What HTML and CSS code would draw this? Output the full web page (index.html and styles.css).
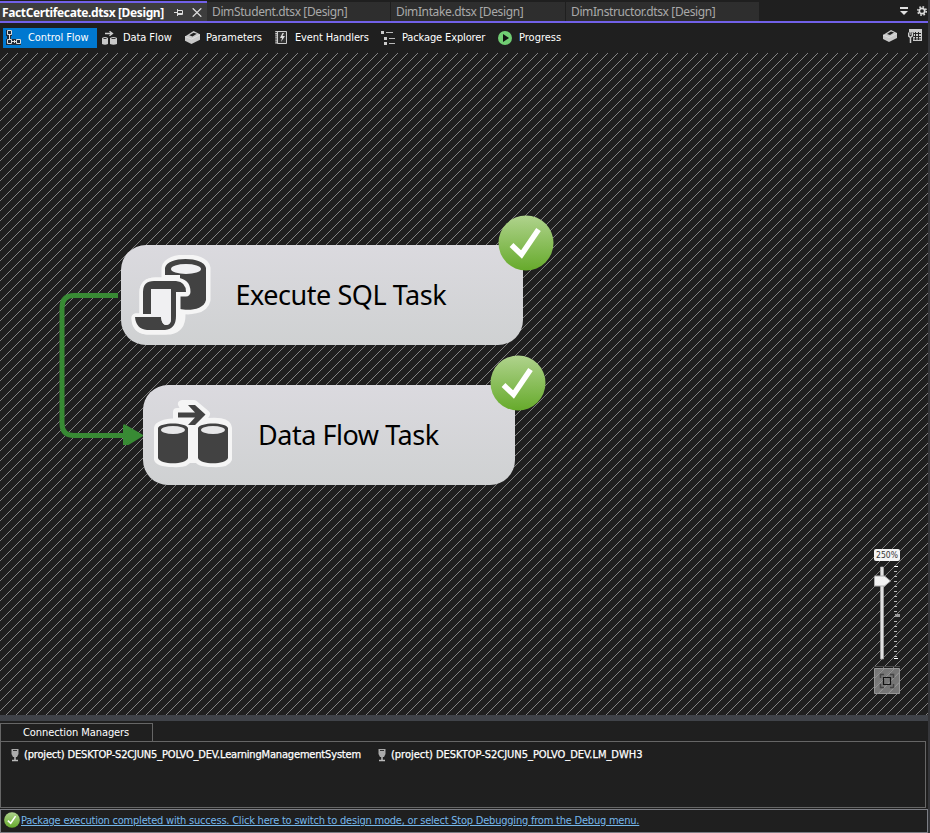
FILE: index.html
```html
<!DOCTYPE html>
<html lang="en">
<head>
<meta charset="utf-8">
<title>FactCertifecate.dtsx [Design]</title>
<link rel="stylesheet" href="styles.css">
</head>
<body>
<svg class="defs" width="0" height="0">
  <defs>
    <linearGradient id="green" x1="0" y1="0" x2="0" y2="1"><stop offset="0" stop-color="#b0d38d"/><stop offset="1" stop-color="#66aa2b"/></linearGradient>
    <symbol id="ok" viewBox="0 0 56 56"><circle cx="28" cy="28" r="27.5" fill="url(#green)"/><path d="M13.5 30l10 9.500L40.500 14.500" fill="none" stroke="#fff" stroke-width="5.500"/></symbol>
    <symbol id="box" viewBox="0 0 14 12"><path d="M0 5L8 0l6 3v5l-8 4-6-3z" fill="#c8c8c8"/><path d="M4 4l4-2.500 3 1-4 2.500z" fill="#202020"/><path d="M0 5l6 2.500L14 3.500" fill="none" stroke="#e4e4e4" stroke-width=".7"/></symbol>
    <symbol id="plug" viewBox="0 0 8 13"><path d="M.5 0h7v5L6 8H2L.5 5z" fill="#aaa"/><path d="M2 1.500h4" stroke="#333"/><path d="M4 8v4M1 11.500h6" stroke="#bbb" stroke-width="1.500"/></symbol>
  </defs>
</svg>
<div class="window">
  <header class="tabs">
    <div class="tab active"><span class="t0">FactCertifecate.dtsx [Design]</span>
      <svg class="pin" width="9" height="9" viewBox="0 0 9 9"><path d="M0 4.500h3M3.500 1v7M4 2.500h4.500v4H4M4 5.500h4" fill="none" stroke="#ddd"/></svg>
      <svg class="close" width="10" height="9" viewBox="0 0 10 9"><path d="M.7.3l8.600 8.400M9.300.3L.7 8.700" stroke="#ddd" stroke-width="1.300"/></svg>
    </div>
    <div class="tab w1"><span>DimStudent.dtsx [Design]</span></div>
    <div class="tab w2"><span>DimIntake.dtsx [Design]</span></div>
    <div class="tab w3"><span>DimInstructor.dtsx [Design]</span></div>
    <div class="tabtools">
      <svg width="8" height="8" viewBox="0 0 8 8"><path d="M0 0h8v2H0zM0 4h8L4 8z" fill="#e0e0e0"/></svg>
      <svg width="10" height="10" viewBox="0 0 10 10"><circle cx="5" cy="5" r="2.700" fill="none" stroke="#ddd" stroke-width="1.700"/><circle cx="5" cy="5" r="4.200" fill="none" stroke="#ddd" stroke-width="1.600" stroke-dasharray="1.650 1.650"/></svg>
    </div>
  </header>
  <nav class="toolbar">
    <div class="tool selected">
      <svg width="15" height="15" viewBox="0 0 15 15"><path d="M0 0h6v6H5v3h10v6H0V9h1V6H0z" fill="#1f2a38"/><path d="M1.500.500h4v4h-4zM1.500 9.500h4v4h-4zM10.500 9.500h4v4h-4z" fill="none" stroke="#ddd"/><path d="M3.500 5v4M6 11.500h4M8.500 10v3" stroke="#ddd"/></svg>
      <span class="a0">Control Flow</span>
    </div>
    <div class="tool p1">
      <svg width="15" height="14" viewBox="0 0 15 14"><path d="M3 2.500h7M7.500.300l3 2.200-3 2.200" fill="none" stroke="#ccc" stroke-width="1.300"/><path d="M0 7q3-2 6 0v6q-3 1.500-6 0zM8 7q3.500-2 7 0v6q-3.500 1.500-7 0z" fill="#c8c8c8"/><path d="M1.500 7.500h3M9.500 7.500h4" stroke="#333"/></svg>
      <span class="a1">Data Flow</span>
    </div>
    <div class="tool p2"><svg width="15" height="13"><use href="#box"/></svg><span class="a2">Parameters</span></div>
    <div class="tool p3">
      <svg width="12" height="13" viewBox="0 0 12 13"><path d="M2.500.500h9v12h-9z" fill="#333" stroke="#ccc"/><path d="M1.500 0v13" stroke="#ccc" stroke-width="2.500" stroke-dasharray="1.300 .8"/><path d="M7.500 2L5 7h2l-1 4 4-6H7.500L9 2z" fill="#ddd"/></svg>
      <span class="a3">Event Handlers</span>
    </div>
    <div class="tool p4">
      <svg width="14" height="14" viewBox="0 0 14 14"><path d="M0 0h3v3H0zM3 6h3v3H3zM3 11h3v3H3z" fill="#ccc"/><path d="M5 1.500h7M8 7.500h6M8 12.500h6" stroke="#bbb"/></svg>
      <span class="a4">Package Explorer</span>
    </div>
    <div class="tool p5">
      <svg width="14" height="14" viewBox="0 0 14 14"><circle cx="7" cy="7" r="7" fill="#71cd73"/><path d="M5 3l6 4-6 4z" fill="#111"/></svg>
      <span>Progress</span>
    </div>
    <div class="righttools">
      <svg width="14" height="12"><use href="#box"/></svg>
      <svg width="14" height="14" viewBox="0 0 14 14"><path d="M1 0h13v12H5V6H1z" fill="#ccc"/><path d="M5.500 4.500H13M5.500 7.500H13M5.500 10H13M7.500 3v8M10.500 3v8" stroke="#252525"/><path d="M2.500 14V8M.7 3.500V7l1.800 1.500L4.300 7V3.500" fill="none" stroke="#202020" stroke-width="3"/><path d="M2.500 14V8M.7 3.500V7l1.800 1.500L4.300 7V3.500" fill="none" stroke="#ccc" stroke-width="1.500"/></svg>
    </div>
  </nav>
  <main class="canvas">
    <svg class="hatch" width="928" height="662">
      <defs><pattern id="lines" width="10" height="10" patternUnits="userSpaceOnUse" y="8"><path d="M9 0h1v1H9zM8 1h1v1H8zM7 2h1v1H7zM6 3h1v1H6zM5 4h1v1H5zM4 5h1v1H4zM3 6h1v1H3zM2 7h1v1H2zM1 8h1v1H1zM0 9h1v1H0z" fill="#828282" shape-rendering="crispEdges"/></pattern></defs>
      <rect width="928" height="662" fill="url(#lines)"/>
    </svg>
    <svg class="connector" width="90" height="160" viewBox="0 0 90 160"><path d="M60 10.500H16Q4 10.500 4 22.500V138.500Q4 150.500 16 150.500H68" fill="none" stroke="#388a34" stroke-width="5"/><path d="M65 141q0-3 3-1l18 10.500-18 11q-3 1-3-1z" fill="#388a34"/></svg>
    <section class="node sql">
      <svg class="icon" width="80" height="80" viewBox="0 0 80 80">
        <path d="M35 13C37 1 73 1 75 13V45C73 55 57 56 50 54V60Q50 73 39 75H16Q5 74 5 63H13V37Q13 27 24 27H35z" fill="#f5f5f5" stroke="#f5f5f5" stroke-width="9" stroke-linejoin="round"/>
        <path d="M34 13C36 1 73 1 75 13V45C73 55 57 56 49 54V20H34z" fill="#424242"/>
        <ellipse cx="55" cy="14" rx="15" ry="5" fill="#f0f0f2"/>
        <path d="M13 59V37Q13 27 24 27H45Q55 28 55 37H45V61Q45 74 34 75H16Q6 74 5 63H30" fill="#f5f5f5" stroke="#f5f5f5" stroke-width="9" stroke-linejoin="round"/>
        <path d="M12 59V37Q12 26 23 26H45Q55 27 55 37H45V61Q45 74 34 75H16Q5 74 4 62H30Q31 70 35 70Q40 69 40 64V34H20V59z" fill="#424242"/>
        <path d="M20 34H40V64Q40 70 35 70Q31 70 30 62H20z" fill="#f0f0f2"/>
      </svg>
      <span class="label l1">Execute SQL Task</span>
      <svg class="badge" width="56" height="56"><use href="#ok"/></svg>
    </section>
    <section class="node flow">
      <svg class="icon" width="80" height="80" viewBox="0 0 80 80">
        <path d="M5 33Q6 28 24 27V17H33L29 9H41L53 19 47 28Q74 24 75 33V64Q73 69 59 68Q46 68 45 64H35Q33 69 20 68Q6 68 5 64z" fill="#f5f5f5" stroke="#f5f5f5" stroke-width="8" stroke-linejoin="round"/>
        <path d="M5 33C7 27 33 27 35 33V63C33 70 7 70 5 63zM45 33C47 27 73 27 75 33V63C73 70 47 70 45 63z" fill="#424242"/>
        <ellipse cx="20" cy="35" rx="12" ry="4" fill="#e7e7e8"/><ellipse cx="60" cy="35" rx="12" ry="4" fill="#e7e7e8"/>
        <path d="M25 17.500H42L35 10H42L52.500 19.500 42 30H35L42 22.500H25z" fill="#424242"/>
      </svg>
      <span class="label l2">Data Flow Task</span>
      <svg class="badge" width="56" height="56"><use href="#ok"/></svg>
    </section>
    <aside class="zoom">
      <span class="percent">250%</span>
      <svg width="28" height="95" viewBox="0 0 28 95">
        <path d="M6.500 1h3v92h-3z" fill="#e2e2e2" stroke="#aaa" stroke-width=".7"/><path d="M.5 10h10l6 5-6 5H.5z" fill="#f1f1f1" stroke="#aaa"/>
        <path d="M21.500 0V94" stroke="#bbb" stroke-width="3" stroke-dasharray="1 4"/><path d="M20 .5h4M20 92.500h4" stroke="#fff"/><path d="M21 49.500h5" stroke="#999" stroke-width="3"/>
      </svg>
      <svg class="fit" width="26" height="28" viewBox="0 0 26 28"><path d="M0 .5h26" stroke="#4d4d4d"/><path d="M.5 2.500h25v25H.5z" fill="#808080" fill-opacity=".9" stroke="#969696"/><path d="M1 12L10 3M1 22L20 3M5 27L25 7M15 27L25 17" stroke="#999" stroke-width=".8"/><path d="M6.500 12V8.500H10M16 8.500h3.500V12M19.500 18v3.500H16M10 21.500H6.500V18" fill="none" stroke="#444" stroke-width="1.500"/><path d="M9.500 11.500h7v7h-7z" fill="none" stroke="#111" stroke-width="1.200"/></svg>
    </aside>
  </main>
  <div class="splitter"></div>
  <section class="connections">
    <div class="conntab"><span class="c0">Connection Managers</span></div>
    <div class="connlist">
      <div class="conn"><svg width="8" height="13"><use href="#plug"/></svg><span class="c1">(project) DESKTOP-S2CJUN5_POLVO_DEV.LearningManagementSystem</span></div>
      <div class="conn"><svg width="8" height="13"><use href="#plug"/></svg><span class="c2">(project) DESKTOP-S2CJUN5_POLVO_DEV.LM_DWH3</span></div>
    </div>
  </section>
  <footer class="status"><svg width="16" height="16"><use href="#ok"/></svg><a class="s0">Package execution completed with success. Click here to switch to design mode, or select Stop Debugging from the Debug menu.</a></footer>
</div>
</body>
</html>
```
FILE: styles.css
```css
* { box-sizing: border-box; }
body { margin: 0; background: #1f1f1f; color: #fff; font: 11px/16px "DejaVu Sans Condensed", "Noto Sans", sans-serif; overflow: hidden; }
svg { display: block; flex: none; }
span, a { white-space: nowrap; flex: none; }
.defs { position: absolute; }
.window { width: 930px; height: 833px; border-right: 2px solid #35363a; display: flex; flex-direction: column; }
.tabs { height: 23px; flex: none; display: flex; border-bottom: 2px solid #7160e8; padding-top: 1px; font: 12px/19px "Noto Sans", sans-serif; letter-spacing: -.38px; color: #a9a9a9; }
.tab { background: #2e2e2e; margin-top: 1px; border-right: 1px solid #1f1f1f; }
.tab.active { width: 207px; margin: 0; padding: 0 0 0 2px; display: flex; align-items: center; background: #3d3d3d; border-top: 2px solid #7160e8; border-right: 0; color: #fff; font-weight: 700; }
.active span { width: 162px; }
.pin { margin: 1px 0 0 10px; }
.close { margin: 1px 0 0 9px; }
.w1 { width: 184px; padding-left: 5px; }
.w2 { width: 175px; padding-left: 5px; }
.w3 { width: 194px; padding-left: 5px; }
.tabtools { margin-left: auto; display: flex; align-items: center; gap: 9px; padding-right: 1px; }
.toolbar { height: 30px; flex: none; display: flex; align-items: center; padding: 0 6px 1px 3px; }
.tool { display: flex; align-items: center; height: 20px; }
.tool.selected { background: #0078d0; width: 94px; padding-left: 3px; gap: 7px; }
.p1 { margin-left: 5px; gap: 6px; width: 83px; }
.p2 { gap: 6px; width: 90px; }
.p3 { gap: 8px; width: 106px; }
.p4 { gap: 7px; width: 117px; }
.p5 { gap: 7px; }
.a0, .a1, .a2, .c0 { letter-spacing: -.08px; }
.a3, .a4 { letter-spacing: -.13px; }
.righttools { margin: -4px 0 0 auto; display: flex; align-items: center; gap: 11px; }
.canvas { height: 662px; flex: none; display: grid; position: relative; overflow: hidden; }
.hatch { grid-area: 1 / 1; }
.connector { position: absolute; left: 58px; top: 232px; }
.node { position: absolute; height: 100px; border-radius: 25px; background: linear-gradient(#dbdadf, #cfd1d2); display: flex; align-items: center; padding-left: 10px; color: #000; font: 27px/40px "Noto Sans", sans-serif; letter-spacing: -.46px; }
.sql { left: 120.500px; top: 192.400px; width: 402.500px; }
.flow { left: 143px; top: 332.400px; width: 372.400px; }
.label { margin-left: 25px; }
.badge { position: absolute; right: -31px; top: -30.400px; }
.zoom { position: absolute; left: 874px; top: 496px; width: 28px; display: flex; flex-direction: column; }
.percent { width: 26px; height: 12px; border-radius: 2px; background: #f4f4f4; color: #333; font-size: 8.500px; line-height: 12px; text-align: center; margin-bottom: 5px; }
.fit { margin-top: 5px; }
.splitter { height: 6px; flex: none; background: #404349; }
.connections { height: 86px; flex: none; padding-right: 2px; margin-top: 2px; }
.conntab { width: 153px; height: 18px; border: 1px solid #666; border-bottom: 0; padding-left: 22px; line-height: 18px; }
.connlist { height: 67px; border: 1px solid #666; display: flex; padding: 5px 0 0 10px; }
.conn { display: flex; align-items: center; height: 16px; gap: 5px; width: 367px; -webkit-text-stroke: .25px #fff; }
.c1 { letter-spacing: -.17px; }
.c2 { letter-spacing: -.02px; }
.status { height: 24px; flex: none; border: 1px solid #7c7e85; display: flex; align-items: center; padding: 0 0 2px 3px; gap: 1px; color: #75b7eb; }
.status a { text-decoration: underline; letter-spacing: -.215px; padding-top: 2px; }
```
